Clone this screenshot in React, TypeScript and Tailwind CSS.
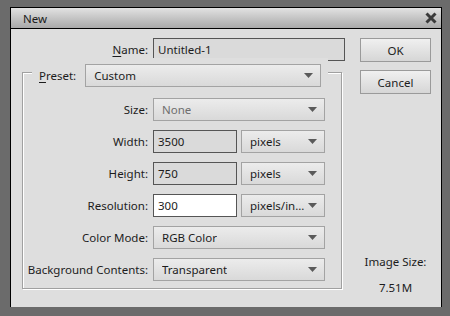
import React from 'react';

const font = { fontFamily: '"Noto Sans", "Open Sans", sans-serif' };

const Arrow = () => (
  <svg width="9" height="5" viewBox="0 0 9 5" className="shrink-0">
    <path d="M0 0H9L4.5 5Z" fill="#5a5a5a" />
  </svg>
);

const Select: React.FC<{ value: string; width: string; disabled?: boolean }> = ({ value, width, disabled }) => (
  <div
    className={`${width} h-[23px] flex items-center justify-between pl-[8px] pr-[7px] border border-[#a3a3a3] bg-gradient-to-b from-[#ececec] to-[#d9d9d9] ${
      disabled ? 'text-[#6e6e6e]' : 'text-[#1c1c1c]'
    }`}
  >
    <span className="truncate">{value}</span>
    <Arrow />
  </div>
);

const Input: React.FC<{ value: string; width: string; white?: boolean }> = ({ value, width, white }) => (
  <div
    className={`${width} h-[23px] flex items-center pl-[4px] border border-[#555555] text-[#1c1c1c] ${
      white ? 'bg-white' : 'bg-[#dadada]'
    }`}
  >
    {value}
  </div>
);

const Row: React.FC<{ label: string; children: React.ReactNode }> = ({ label, children }) => (
  <div className="flex items-center gap-[5px]">
    <span className="w-[125px] text-right whitespace-nowrap text-[#1c1c1c]">{label}</span>
    {children}
  </div>
);

const Button: React.FC<{ label: string }> = ({ label }) => (
  <div className="w-[71px] h-[24px] flex items-center justify-center border border-[#9a9a9a] bg-gradient-to-b from-[#f0f0f0] to-[#d6d6d6] text-[#1c1c1c]">
    {label}
  </div>
);

export default function App() {
  return (
    <div className="w-[450px] h-[316px] bg-[#6b6b6b] pt-[7px] pl-[10px] text-[11.5px] leading-[15px]" style={font}>
      <div className="w-[432px] h-[300px] flex flex-col bg-[#dedede] border-t border-l border-r border-black">
        {/* Title bar */}
        <div className="h-[21px] flex items-center justify-between pl-[12px] pr-[4px] border-b border-black bg-gradient-to-b from-[#e2e2e2] to-[#a9a9a9] text-[#1a1a1a]">
          <span>New</span>
          <svg width="12" height="12" viewBox="0 0 12 12">
            <path d="M1.5 1.5L10.5 10.5M10.5 1.5L1.5 10.5" stroke="#3a3a3a" strokeWidth="3" />
          </svg>
        </div>

        {/* Body */}
        <div className="flex-1 flex pl-[11px] pr-[10px]">
          <div className="w-[323px] flex flex-col pt-[9px]">
            <div className="flex items-center gap-[5px]">
              <span className="w-[126px] text-right text-[#1c1c1c]">
                <span className="underline underline-offset-2">N</span>ame:
              </span>
              <Input value="Untitled-1" width="w-[192px]" />
            </div>

            <fieldset className="mt-[-3px] w-[320px] border border-[#a0a0a0] shadow-[inset_1px_1px_0_#ffffff,1px_1px_0_#ffffff] pb-[7px]">
              <legend className="ml-[9px] pt-[6px] px-[7px] bg-[#dedede] flex items-center gap-[9px]">
                <span className="text-[#1c1c1c]">
                  <span className="underline underline-offset-2">P</span>reset:
                </span>
                <Select value="Custom" width="w-[236px]" />
              </legend>
              <div className="flex flex-col gap-[9px] pt-[11px]">
                <Row label="Size:">
                  <Select value="None" width="w-[172px]" disabled />
                </Row>
                <Row label="Width:">
                  <div className="flex gap-[4px]">
                    <Input value="3500" width="w-[84px]" />
                    <Select value="pixels" width="w-[84px]" />
                  </div>
                </Row>
                <Row label="Height:">
                  <div className="flex gap-[4px]">
                    <Input value="750" width="w-[84px]" />
                    <Select value="pixels" width="w-[84px]" />
                  </div>
                </Row>
                <Row label="Resolution:">
                  <div className="flex gap-[4px]">
                    <Input value="300" width="w-[84px]" white />
                    <Select value="pixels/in..." width="w-[84px]" />
                  </div>
                </Row>
                <Row label="Color Mode:">
                  <Select value="RGB Color" width="w-[172px]" />
                </Row>
                <Row label="Background Contents:">
                  <Select value="Transparent" width="w-[172px]" />
                </Row>
              </div>
            </fieldset>
          </div>

          <div className="flex-1 flex flex-col items-end pt-[9px] pb-[12px]">
            <div className="w-[71px] flex flex-col gap-[8px]">
              <Button label="OK" />
              <Button label="Cancel" />
            </div>
            <div className="mt-auto w-[71px] flex flex-col items-center gap-[11px] text-[#1c1c1c]">
              <span className="whitespace-nowrap">Image Size:</span>
              <span>7.51M</span>
            </div>
          </div>
        </div>
      </div>
    </div>
  );
}
